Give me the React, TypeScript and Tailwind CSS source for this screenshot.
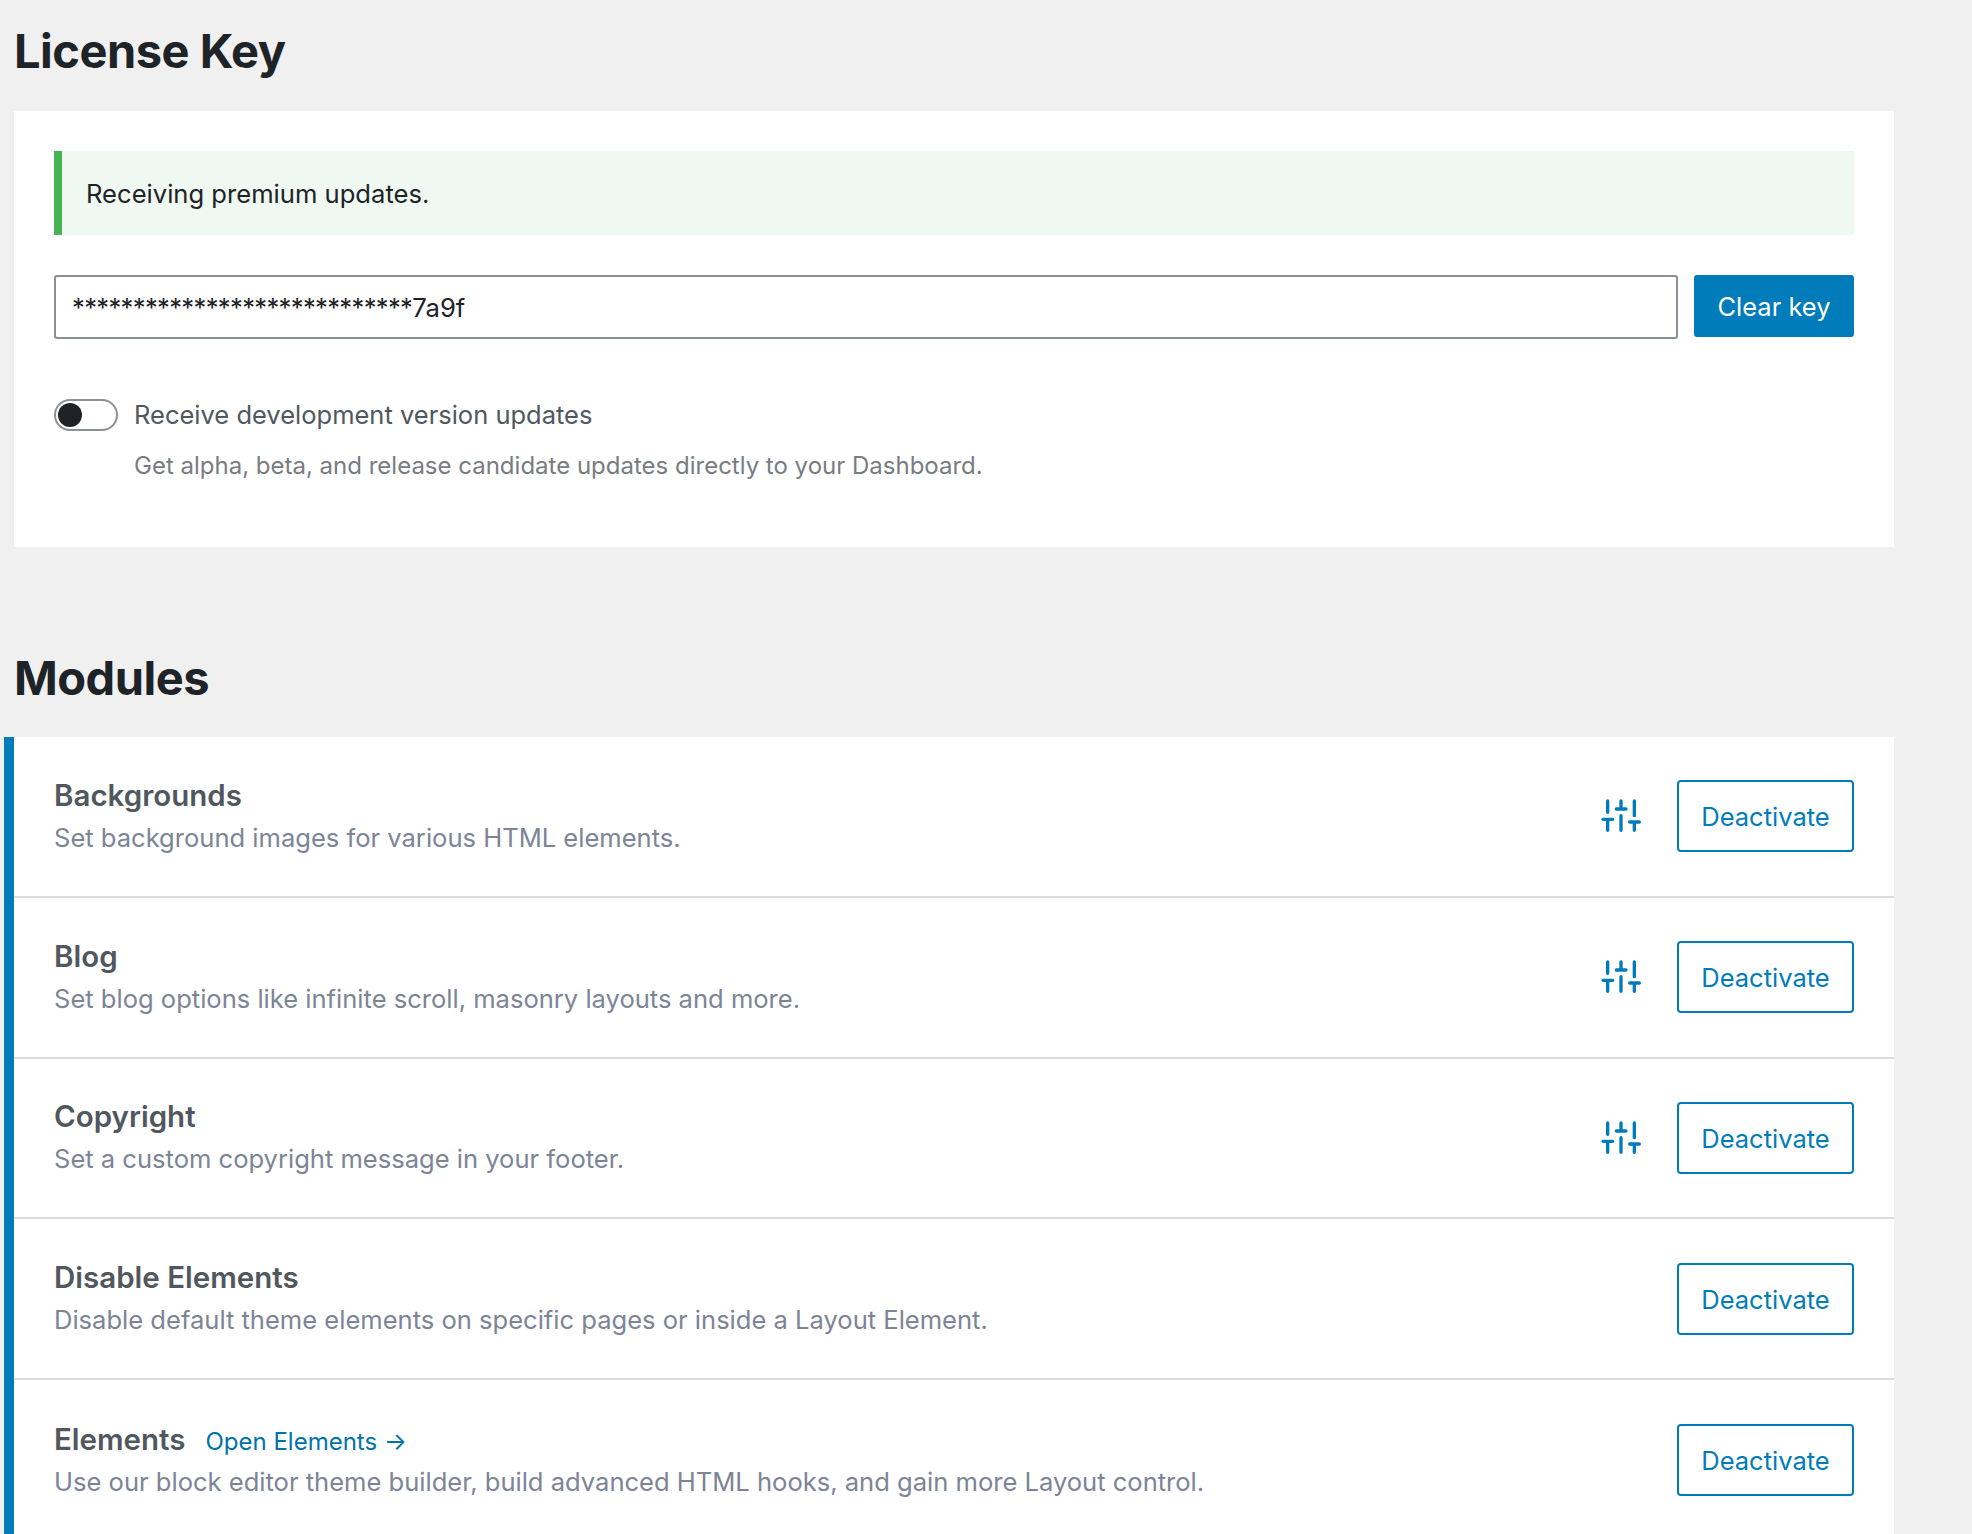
import React from "react";

function Sliders() {
  return (
    <svg width="44" height="36" viewBox="120 112 132 108" fill="none" stroke="#007cba" strokeWidth="10" strokeLinecap="round" className="-mt-[2px] shrink-0">
      <path d="M143 124V158M129 179H158M143 179V212" />
      <path d="M183 124V148M169 148H198M183 168V212" />
      <path d="M223 124V168M209 187H238M223 187V212" />
    </svg>
  );
}

const modules = [
  { t: "Backgrounds", d: "Set background images for various HTML elements.", s: true },
  { t: "Blog", d: "Set blog options like infinite scroll, masonry layouts and more.", s: true },
  { t: "Copyright", d: "Set a custom copyright message in your footer.", s: true },
  { t: "Disable Elements", d: "Disable default theme elements on specific pages or inside a Layout Element.", s: false },
  { t: "Elements", d: "Use our block editor theme builder, build advanced HTML hooks, and gain more Layout control.", s: false, link: true },
];

export default function App() {
  return (
    <div className="h-[1534px] w-[1972px] overflow-hidden bg-[#f0f0f1] pr-[78px] pl-[4px] font-['Inter',sans-serif]">
      <div className="pl-[10px]">
        <h1 className="flex h-[111px] items-center pb-[10px] text-[47px] leading-none font-bold tracking-[-0.5px] text-[#1d2327]">License Key</h1>
        <section className="flex h-[436px] flex-col bg-white p-[40px]">
          <div className="flex h-[84px] items-center border-l-[8px] border-[#46b450] bg-[#eff8f1] pt-[2px] pl-[24px] text-[25.6px] text-[#1d2327]">Receiving premium updates.</div>
          <div className="mt-[40px] flex items-start">
            <div className="flex h-[64px] flex-1 items-center rounded-[3px] border-2 border-[#8c8f94] pt-[2px] pl-[16px] text-[25.6px] text-[#1d2327]">
              <span className="tracking-[-0.67px]">****************************</span>7a9f
            </div>
            <button className="ml-[16px] h-[62px] w-[160px] rounded-[3px] bg-[#007cba] pt-[2px] text-[25.5px] text-white">Clear key</button>
          </div>
          <div className="mt-[56px] flex items-center">
            <div className="flex h-[32px] w-[64px] items-center rounded-full border-2 border-[#8c8f94] pl-[2px]">
              <div className="h-[24px] w-[24px] rounded-full bg-[#1e2125]" />
            </div>
            <span className="ml-[16px] pt-[1px] text-[25.5px] text-[#50575e]">Receive development version updates</span>
          </div>
          <p className="mt-[14px] ml-[80px] text-[24px] text-[#787c82]">Get alpha, beta, and release candidate updates directly to your Dashboard.</p>
        </section>
        <h1 className="flex h-[190px] items-center pt-[70px] text-[47px] leading-none font-bold tracking-[-0.5px] text-[#1d2327]">Modules</h1>
      </div>
      <div className="border-l-[10px] border-[#007cba] bg-white">
        {modules.map((m) => (
          <div key={m.t} className="flex h-[160.75px] items-center border-b-2 border-[#dcdcdc] px-[40px] last:h-[162px]">
            <div className="min-w-0 flex-1">
              <div className="flex items-baseline">
                <span className="text-[29.5px] leading-[42px] font-semibold text-[#50575e]">{m.t}</span>
                {m.link && <span className="ml-[20px] text-[24px] text-[#0073aa]">Open Elements →</span>}
              </div>
              <p className="pt-px text-[25.55px] leading-[42px] text-[#7c8496]">{m.d}</p>
            </div>
            {m.s && <Sliders />}
            <button className="ml-[33px] h-[72px] w-[177px] rounded-[4px] border-2 border-[#007cba] pt-[2px] text-[25.5px] text-[#007cba]">Deactivate</button>
          </div>
        ))}
      </div>
    </div>
  );
}
